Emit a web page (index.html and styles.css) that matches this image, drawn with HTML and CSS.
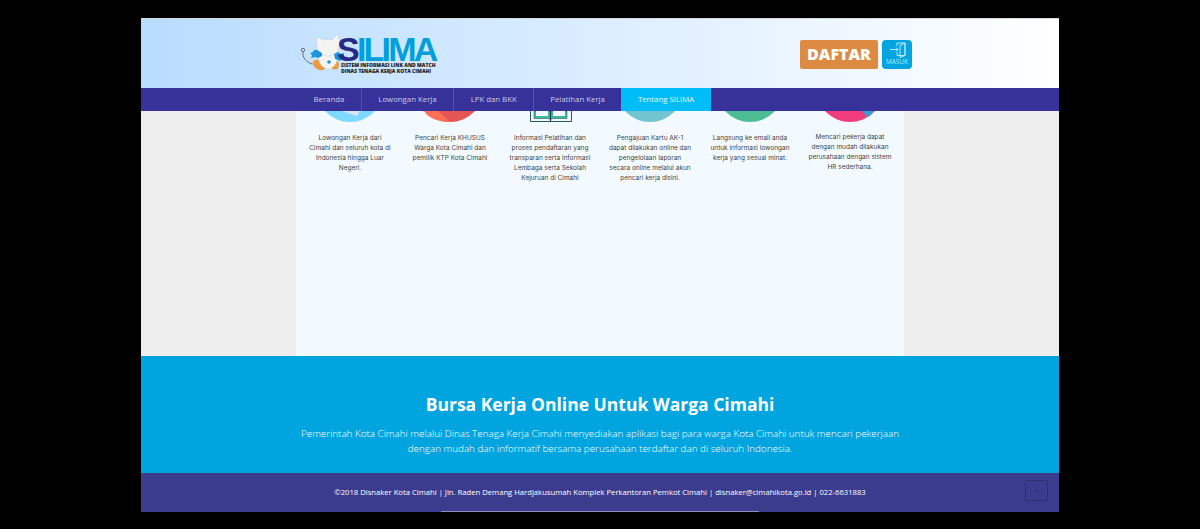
FILE: index.html
```html
<!DOCTYPE html>
<html lang="en">

<head>
    <meta charset="UTF-8" />
    <title>SILIMA</title>
    <link rel="stylesheet" href="styles.css">
</head>

<body>
    <div class="frame">
        <header class="top">
            <a class="logo" href="#">
                <svg class="mascot" viewBox="0 0 48 42" width="48" height="42">
                    <!-- tail -->
                    <path d="M7 22c-1 5 3 10 9 12" fill="none" stroke="#5a6470" stroke-width="0.9" />
                    <circle cx="7" cy="20" r="1.700" fill="none" stroke="#5a6470" stroke-width="0.9" />
                    <!-- legs -->
                    <ellipse cx="23" cy="35" rx="7" ry="4.500" fill="#ee9a45" transform="rotate(30 23 35)" />
                    <ellipse cx="39" cy="35" rx="4" ry="4.500" fill="#ee9a45" />
                    <!-- body and head -->
                    <ellipse cx="32" cy="29" rx="9" ry="9.500" fill="#f4f4f2" />
                    <path d="M21 7c3 1 5 2 7 3 3-1 6-1 8 0l5-6c2 2 3 7 2 12 0 5-3 9-10 10-7 0-11-3-12-9 0-3-1-7 0-10z" fill="#f4f4f2" stroke="#c4c9ce" stroke-width="0.5" />
                    <circle cx="33" cy="32" r="1.800" fill="#1c95dd" />
                    <!-- hands -->
                    <path d="M21 20l-3 0-1 2-3 1 2 2-1 3 4-1 3 1 4-2 0-3z" fill="#1c95dd" />
                    <path d="M38 24l4-2 3 2 3-1 0 3 2 2-4 1-2 2-5-2z" fill="#1c95dd" />
                </svg>
                <span class="logo-text">
                    <span class="logo-name"><b>S</b>ILIMA</span>
                    <span class="logo-sub">SISTEM INFORMASI LINK AND MATCH</span>
                    <span class="logo-sub">DINAS TENAGA KERJA KOTA CIMAHI</span>
                </span>
            </a>
            <div class="actions">
                <a class="btn-daftar" href="#">DAFTAR</a>
                <a class="btn-masuk" href="#">
                    <svg viewBox="0 0 17 16" width="17" height="16" fill="none" stroke="#cdeefa" stroke-width="0.9">
                        <path d="M8 4V1h8v12.500h-5M8 10v3.500h3" />
                        <path d="M11 3.500L16 1v12.500l-5 2z" />
                        <path d="M1 7.500h8M7 5.500l2 2-2 2" />
                    </svg>
                    <span>MASUK</span>
                </a>
            </div>
        </header>

        <nav class="menu">
            <a href="#">Beranda</a>
            <a href="#">Lowongan Kerja</a>
            <a href="#">LPK dan BKK</a>
            <a class="tight" href="#">Pelatihan Kerja</a>
            <a class="active" href="#">Tentang SILIMA</a>
        </nav>

        <main class="content">
            <section class="panel">
                <div class="feature">
                    <svg class="cut" viewBox="0 0 100 11">
                        <circle cx="50" cy="-23" r="34" fill="#7fd8ff" />
                        <path d="M42 0h18l-3 5-6-2z" fill="#d8e6f0" />
                    </svg>
                    <p>Lowongan Kerja dari<br>Cimahi dan seluruh kota di<br>Indonesia hingga Luar<br>Negeri.</p>
                </div>
                <div class="feature">
                    <svg class="cut" viewBox="0 0 100 11">
                        <circle cx="50" cy="-23" r="34" fill="#e45656" />
                        <path d="M24 0h14l12 11c-12 0-22-4-26-11z" fill="#ff7057" />
                    </svg>
                    <p>Pencari Kerja KHUSUS<br>Warga Kota Cimahi dan<br>pemilik KTP Kota Cimahi</p>
                </div>
                <div class="feature">
                    <svg class="cut" viewBox="0 0 100 11">
                        <path d="M30.500 0v10.500h41V0" fill="none" stroke="#2b5568" stroke-width="1" />
                        <path d="M34 0v7.500h14l2.500 1 2.500-1h14V0z" fill="#3cb89a" stroke="#1f4a5c" stroke-width="0.500" />
                        <path d="M36 0h12v5H36zM53 0h12v5H53z" fill="#f2fbf8" />
                        <path d="M50.500 0v10" stroke="#1f3a50" stroke-width="1.200" />
                    </svg>
                    <p>Informasi Pelatihan dan<br>proses pendaftaran yang<br>transparan serta informasi<br>Lembaga serta Sekolah<br>Kejuruan di Cimahi</p>
                </div>
                <div class="feature">
                    <svg class="cut" viewBox="0 0 100 11">
                        <circle cx="50" cy="-23" r="34" fill="#72c4d0" />
                    </svg>
                    <p>Pengajuan Kartu AK-1<br>dapat dilakukan online dan<br>pengelolaan laporan<br>secara online melalui akun<br>pencari kerja disini.</p>
                </div>
                <div class="feature">
                    <svg class="cut" viewBox="0 0 100 11">
                        <circle cx="50" cy="-23" r="34" fill="#4dbd94" />
                    </svg>
                    <p>Langsung ke email anda<br>untuk informasi lowongan<br>kerja yang sesuai minat.</p>
                </div>
                <div class="feature last">
                    <svg class="cut" viewBox="0 0 100 11">
                        <circle cx="50" cy="-23" r="34" fill="#f23d7d" />
                        <path d="M62 0h12l-4 5-3 1z" fill="#3f9bd6" />
                    </svg>
                    <p>Mencari pekerja dapat<br>dengan mudah dilakukan<br>perusahaan dengan sistem<br>HR sederhana.</p>
                </div>
            </section>
        </main>

        <section class="promo">
            <h2>Bursa Kerja Online Untuk Warga Cimahi</h2>
            <p>Pemerintah Kota Cimahi melalui Dinas Tenaga Kerja Cimahi menyediakan aplikasi bagi para warga Kota Cimahi untuk mencari pekerjaan<br>dengan mudah dan informatif bersama perusahaan terdaftar dan di seluruh Indonesia.</p>
        </section>

        <footer class="foot">
            <p>©2018 Disnaker Kota Cimahi | Jln. Raden Demang Hardjakusumah Komplek Perkantoran Pemkot Cimahi | disnaker@cimahikota.go.id | 022-6631883</p>
            <a class="to-top" href="#">
                <svg viewBox="0 0 8 5" width="6" height="4" fill="none" stroke="#20285f" stroke-width="1.200">
                    <path d="M1 4l3-3 3 3" />
                </svg>
            </a>
            <span class="foot-line"></span>
        </footer>
    </div>
</body>

</html>
```

FILE: styles.css
```css
* {
    box-sizing: border-box;
}

html,
body {
    margin: 0;
    height: 529px;
    overflow: hidden;
}

body {
    background-color: #000;
    padding-top: 18px;
    font-family: "Open Sans", Arial, sans-serif;
}

a {
    text-decoration: none;
}

p {
    margin: 0;
}

.frame {
    width: 918px;
    margin: 0 auto;
    border-top: 1px solid #d8d8d8;
}

/* header */
.top {
    height: 69px;
    padding: 11px 147px 0 155px;
    display: flex;
    justify-content: space-between;
    background: linear-gradient(to right, #b8dcff, #ffffff);
}

.logo {
    display: flex;
    height: 44px;
}

.mascot {
    flex: none;
}

.logo-text {
    display: flex;
    flex-direction: column;
    margin-left: -7px;
    padding-top: 7px;
}

.logo-name {
    font-family: "Liberation Sans", Arial, sans-serif;
    font-weight: bold;
    font-size: 34px;
    line-height: 25px;
    letter-spacing: -2.800px;
    color: #00a0dc;
}

.logo-name b {
    color: #262a85;
}

.logo-sub {
    font-weight: 800;
    font-size: 5px;
    line-height: 6px;
    color: #222;
    margin-left: 4px;
    white-space: nowrap;
}

.actions {
    display: flex;
    gap: 4px;
    padding-top: 10px;
}

.btn-daftar {
    width: 78px;
    height: 29px;
    background-color: #dd8a42;
    border-radius: 2px;
    color: #fff;
    font-weight: 800;
    font-size: 16px;
    line-height: 29px;
    text-align: center;
}

.btn-masuk {
    width: 30px;
    height: 29px;
    padding-top: 2px;
    background-color: #00a5df;
    border-radius: 4px;
    color: #bfe8f7;
    font-size: 6.400px;
    line-height: 8px;
    text-align: center;
    display: flex;
    flex-direction: column;
    align-items: center;
}

/* nav */
.menu {
    height: 23px;
    padding-left: 156px;
    display: flex;
    background-color: #36329a;
}

.menu a {
    padding: 0 16.500px;
    color: #c9cbe6;
    font-size: 7.800px;
    line-height: 23px;
    border-right: 1px solid #5250a8;
}

.menu a.tight {
    padding: 0 16px;
    border-right: none;
}

.menu a.active {
    padding: 0 17px;
    background-color: #00bdf7;
    color: #e2f7fe;
    border-right: none;
}

/* features */
.content {
    height: 245px;
    padding-left: 155px;
    background-color: #eeeeee;
}

.panel {
    width: 608px;
    height: 100%;
    padding: 0 4px;
    display: grid;
    grid-template-columns: repeat(6, 100px);
    align-items: start;
    background-color: #f3faff;
}

.cut {
    display: block;
    width: 100px;
    height: 11px;
    overflow: hidden;
}

.feature {
    text-align: center;
}

.feature p {
    margin-top: 11px;
    font-family: Inter, Arial, sans-serif;
    font-size: 6.500px;
    line-height: 10px;
    color: #444;
}

.feature.last p {
    margin-top: 10px;
}

/* promo band */
.promo {
    height: 117px;
    padding-top: 36px;
    background-color: #00a5df;
    color: #fff;
    text-align: center;
}

.promo h2 {
    margin: 0 0 9px;
    font-size: 17.500px;
    line-height: 25px;
    font-weight: 700;
}

.promo p {
    font-size: 9.850px;
    line-height: 15px;
    font-weight: 300;
}

/* footer */
.foot {
    position: relative;
    height: 39px;
    background-color: #3c3c8f;
    color: #fff;
    text-align: center;
}

.foot p {
    font-size: 7.670px;
    line-height: 38px;
    font-weight: 500;
}

.to-top {
    position: absolute;
    right: 11px;
    top: 7px;
    width: 23px;
    height: 21px;
    border: 1px solid #2d2f72;
    border-radius: 3px;
    display: flex;
    align-items: center;
    justify-content: center;
}

.foot-line {
    position: absolute;
    left: 300px;
    bottom: 0;
    width: 318px;
    height: 1px;
    background-color: #8d8db8;
}
```
